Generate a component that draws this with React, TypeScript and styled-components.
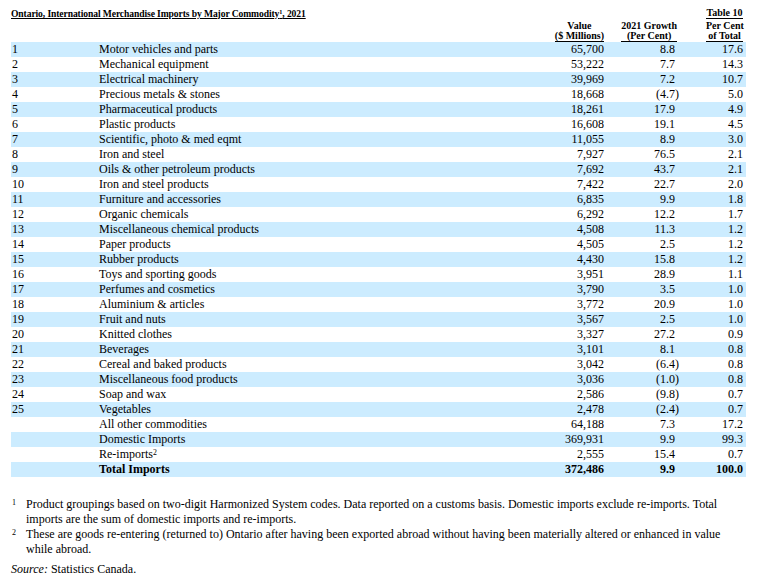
import React from "react";
import styled, { createGlobalStyle } from "styled-components";

const GlobalStyle = createGlobalStyle`
  html, body { margin: 0; padding: 0; background: #fff; }
  body { font-family: "Liberation Serif", "Times New Roman", serif; color: #000; }
`;

const Page = styled.div`
  padding: 8px 16px 0 11px;
  width: 735px;
`;

const COLS = "88px 435px 70px 75px 64px";

const Header = styled.div`
  display: grid;
  grid-template-columns: ${COLS};
  padding-right: 3px;
  font-size: 10px;
  font-weight: bold;
  line-height: 10px;
`;

const Title = styled.div`
  grid-column: 1 / 5;
  grid-row: 1;
  font-size: 9.6px;
  text-decoration: underline;
  text-underline-offset: 1px;
  white-space: nowrap;
  letter-spacing: -0.1px;
  padding-top: 1px;
`;

const TableNo = styled.div`
  grid-column: 5;
  grid-row: 1;
  justify-self: end;
  text-align: center;
  border-bottom: 1px solid #000;
  margin-bottom: 2px;
  width: 37px;
`;

const ColHead = styled.div<{ $col: number; $shift?: number }>`
  grid-column: ${(p) => p.$col};
  grid-row: 2;
  justify-self: end;
  align-self: end;
  text-align: center;
  border-bottom: 1px solid #000;
  margin-right: ${(p) => p.$shift ?? 0}px;
  white-space: nowrap;
  ${(p) => (p.$col === 5 ? "width: 37px;" : "")}
`;

const Sup = styled.sup`
  font-size: 0.65em;
  line-height: 0;
  vertical-align: 0.45em;
`;

const Row = styled.div<{ $shaded: boolean; $bold?: boolean }>`
  display: grid;
  grid-template-columns: ${COLS};
  padding-right: 3px;
  height: 15px;
  line-height: 15px;
  font-size: 12px;
  background: ${(p) => (p.$shaded ? "#CCECFF" : "transparent")};
  font-weight: ${(p) => (p.$bold ? "bold" : "normal")};
  white-space: nowrap;
`;

const Rank = styled.span`
  padding-left: 1px;
`;

const Label = styled.span``;

const Num = styled.span<{ $paren?: boolean }>`
  text-align: right;
  padding-right: ${(p) => (p.$paren ? 0 : 4)}px;
`;

const Val = styled.span`
  text-align: right;
`;

const Notes = styled.div`
  margin-top: 20px;
  font-size: 12px;
  line-height: 15px;
`;

const Note = styled.div`
  display: grid;
  grid-template-columns: 15px 1fr;
`;

const NoteMark = styled.span`
  font-size: 8px;
  line-height: 12px;
  padding-left: 1px;
`;

const Source = styled.div`
  margin-top: 5px;
  font-size: 12px;
  line-height: 15px;
`;

type Item = [string, string, string, string, string];

const data: Item[] = [
  ["1", "Motor vehicles and parts", "65,700", "8.8", "17.6"],
  ["2", "Mechanical equipment", "53,222", "7.7", "14.3"],
  ["3", "Electrical machinery", "39,969", "7.2", "10.7"],
  ["4", "Precious metals & stones", "18,668", "(4.7)", "5.0"],
  ["5", "Pharmaceutical products", "18,261", "17.9", "4.9"],
  ["6", "Plastic products", "16,608", "19.1", "4.5"],
  ["7", "Scientific, photo & med eqmt", "11,055", "8.9", "3.0"],
  ["8", "Iron and steel", "7,927", "76.5", "2.1"],
  ["9", "Oils & other petroleum products", "7,692", "43.7", "2.1"],
  ["10", "Iron and steel products", "7,422", "22.7", "2.0"],
  ["11", "Furniture and accessories", "6,835", "9.9", "1.8"],
  ["12", "Organic chemicals", "6,292", "12.2", "1.7"],
  ["13", "Miscellaneous chemical products", "4,508", "11.3", "1.2"],
  ["14", "Paper products", "4,505", "2.5", "1.2"],
  ["15", "Rubber products", "4,430", "15.8", "1.2"],
  ["16", "Toys and sporting goods", "3,951", "28.9", "1.1"],
  ["17", "Perfumes and cosmetics", "3,790", "3.5", "1.0"],
  ["18", "Aluminium & articles", "3,772", "20.9", "1.0"],
  ["19", "Fruit and nuts", "3,567", "2.5", "1.0"],
  ["20", "Knitted clothes", "3,327", "27.2", "0.9"],
  ["21", "Beverages", "3,101", "8.1", "0.8"],
  ["22", "Cereal and baked products", "3,042", "(6.4)", "0.8"],
  ["23", "Miscellaneous food products", "3,036", "(1.0)", "0.8"],
  ["24", "Soap and wax", "2,586", "(9.8)", "0.7"],
  ["25", "Vegetables", "2,478", "(2.4)", "0.7"],
  ["", "All other commodities", "64,188", "7.3", "17.2"],
  ["", "Domestic Imports", "369,931", "9.9", "99.3"],
  ["", "Re-imports", "2,555", "15.4", "0.7"],
  ["", "Total Imports", "372,486", "9.9", "100.0"],
];

export default function App() {
  return (
    <>
      <GlobalStyle />
      <Page>
        <Header>
          <Title>
            Ontario, International Merchandise Imports by Major Commodity<Sup>1</Sup>, 2021
          </Title>
          <TableNo>Table 10</TableNo>
          <ColHead $col={3}>
            Value
            <br />
            ($ Millions)
          </ColHead>
          <ColHead $col={4} $shift={2}>
            2021 Growth
            <br />
            (Per Cent)
          </ColHead>
          <ColHead $col={5}>
            Per Cent
            <br />
            of Total
          </ColHead>
        </Header>
        {data.map(([rank, label, value, growth, pct], i) => (
          <Row key={label} $shaded={i % 2 === 0} $bold={label === "Total Imports"}>
            <Rank>{rank}</Rank>
            <Label>
              {label}
              {label === "Re-imports" && <Sup>2</Sup>}
            </Label>
            <Val>{value}</Val>
            <Num $paren={growth.startsWith("(")}>{growth}</Num>
            <Val>{pct}</Val>
          </Row>
        ))}
        <Notes>
          <Note>
            <NoteMark>1</NoteMark>
            <span>
              Product groupings based on two-digit Harmonized System codes. Data reported on a customs basis. Domestic
              imports exclude re-imports. Total imports are the sum of domestic imports and re-imports.
            </span>
          </Note>
          <Note>
            <NoteMark>2</NoteMark>
            <span>
              These are goods re-entering (returned to) Ontario after having been exported abroad without having been
              materially altered or enhanced in value while abroad.
            </span>
          </Note>
        </Notes>
        <Source>
          <em>Source:</em> Statistics Canada.
        </Source>
      </Page>
    </>
  );
}
